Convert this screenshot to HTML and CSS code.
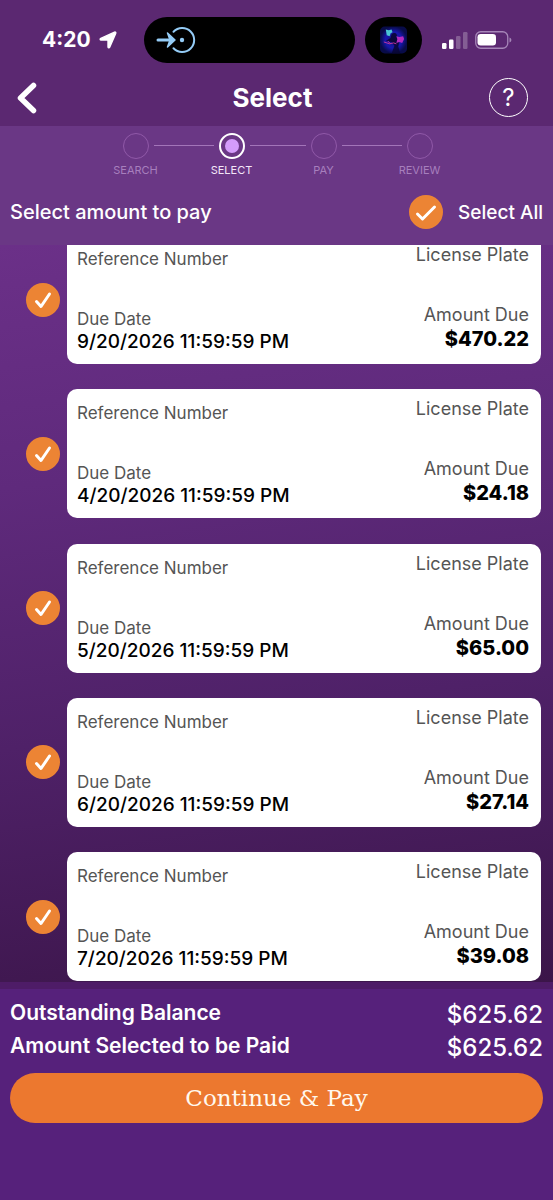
FILE: index.html
```html
<!DOCTYPE html>
<html lang="en">
<head>
<meta charset="utf-8">
<meta name="viewport" content="width=device-width, initial-scale=1">
<title>Select</title>
<link rel="stylesheet" href="styles.css">
</head>
<body>
<div class="app">
  <header class="top">
    <div class="status">
      <div class="clock">
        <span>4:20</span>
        <svg class="locate" viewBox="0 0 18 18" aria-hidden="true"><path d="M15.500 1.200 1.800 7.400c-1.100.5-.8 1.700.3 1.700h6.400q.5 0 .5.500v6.200c0 1.200 1.200 1.400 1.700.3l6-13.600c.4-1-.3-1.700-1.200-1.300Z" fill="#fff" stroke="#fff" stroke-width="1.400" stroke-linejoin="round"/></svg>
      </div>
      <div class="island">
        <svg class="island-icon" viewBox="0 0 40 28" aria-hidden="true" fill="none" stroke="#95ccf6" stroke-linecap="round" stroke-linejoin="round">
          <path d="M2 14h14" stroke-width="3"/>
          <path d="m11.500 7 7.500 7-7.500 7 2.500-7Z" fill="#95ccf6" stroke-width="1.500"/>
          <path d="M17.500 5.700A12 12 0 1 1 17.500 22.300" stroke-width="2"/>
          <circle cx="26" cy="14" r="2.200" fill="#95ccf6" stroke="none"/>
        </svg>
      </div>
      <div class="island island-small">
        <svg class="art" viewBox="0 0 28 28" aria-hidden="true">
          <defs><radialGradient id="glow"><stop offset="0" stop-color="#17107a"/><stop offset=".6" stop-color="#1717ae"/><stop offset="1" stop-color="#080b48"/></radialGradient></defs>
          <rect width="28" height="28" rx="5" fill="url(#glow)"/>
          <path d="M12 8c3-3 7 0 5 3l3 4-1 6 2 7h-9l3-8-3-4-6-1 5-3z" fill="#080630" opacity=".85"/>
          <path d="M6 3l3 1 3-1 1 3-2 1-1 3-3-1z" fill="#4ac6d5"/>
          <path d="M17 10l3 1 4-1 1 3-2 4-3-1-3 1 1-4z" fill="#b32bc0"/>
          <path d="M4 16l6 2 4-1 3 1M8 15l3 3" fill="none" stroke="#c0359e"/>
        </svg>
      </div>
      <svg class="signal" viewBox="0 0 26 17" aria-hidden="true" fill="#fff"><rect y="11" width="4.500" height="6" rx="1.200"/><rect x="7" y="7.500" width="4.500" height="9.500" rx="1.200"/><rect x="14" y="4" width="4.500" height="13" rx="1.200" opacity=".25"/><rect x="21" width="4.500" height="17" rx="1.200" opacity=".25"/></svg>
      <svg class="battery" viewBox="0 0 38 18" aria-hidden="true"><rect x=".75" y=".75" width="32" height="16.500" rx="5" fill="none" stroke="#a686b8" stroke-width="1.300"/><rect x="2.500" y="3" width="18.500" height="11.500" rx="3.200" fill="#fff"/><path d="M34.500 6.500c2.500 1 2.500 4 0 5z" fill="#a686b8"/></svg>
    </div>
    <div class="nav">
      <button class="back" type="button" aria-label="Back"><svg viewBox="0 0 20 32" aria-hidden="true"><path d="M16.500 3.500 3.500 16l13 12.500" fill="none" stroke="#fff" stroke-width="5.500" stroke-linecap="round" stroke-linejoin="round"/></svg></button>
      <h1 class="title">Select</h1>
      <button class="help" type="button" aria-label="Help">?</button>
    </div>
  </header>

  <section class="panel">
    <ol class="steps">
      <li class="step"><span class="dot"></span>SEARCH</li>
      <li class="link" aria-hidden="true"></li>
      <li class="step current" aria-current="step"><span class="dot"></span>SELECT</li>
      <li class="link short" aria-hidden="true"></li>
      <li class="step"><span class="dot"></span>PAY</li>
      <li class="link" aria-hidden="true"></li>
      <li class="step"><span class="dot"></span>REVIEW</li>
    </ol>
    <div class="choose">
      <h2 class="prompt">Select amount to pay</h2>
      <label class="all"><span class="tick"><input type="checkbox" checked><svg viewBox="0 0 34 34" aria-hidden="true"><path d="m8.500 19 5 5L25.500 12"/></svg></span>Select All</label>
    </div>
  </section>

  <main class="scroller">
    <ul class="bills">
      <li class="bill">
        <label class="tick"><input type="checkbox" checked aria-label="Bill due 9/20/2026"><svg viewBox="0 0 34 34" aria-hidden="true"><path d="m10.500 18.500 4.500 5 8.500-12.500"/></svg></label>
        <div class="card">
          <div class="col"><span class="label">Reference Number</span><span class="label lower">Due Date</span><span class="value">9/20/2026 11:59:59 PM</span></div>
          <div class="col right"><span class="label">License Plate</span><span class="label lower">Amount Due</span><span class="value">$470.22</span></div>
        </div>
      </li>
      <li class="bill">
        <label class="tick"><input type="checkbox" checked aria-label="Bill due 4/20/2026"><svg viewBox="0 0 34 34" aria-hidden="true"><path d="m10.500 18.500 4.500 5 8.500-12.500"/></svg></label>
        <div class="card">
          <div class="col"><span class="label">Reference Number</span><span class="label lower">Due Date</span><span class="value">4/20/2026 11:59:59 PM</span></div>
          <div class="col right"><span class="label">License Plate</span><span class="label lower">Amount Due</span><span class="value">$24.18</span></div>
        </div>
      </li>
      <li class="bill">
        <label class="tick"><input type="checkbox" checked aria-label="Bill due 5/20/2026"><svg viewBox="0 0 34 34" aria-hidden="true"><path d="m10.500 18.500 4.500 5 8.500-12.500"/></svg></label>
        <div class="card">
          <div class="col"><span class="label">Reference Number</span><span class="label lower">Due Date</span><span class="value">5/20/2026 11:59:59 PM</span></div>
          <div class="col right"><span class="label">License Plate</span><span class="label lower">Amount Due</span><span class="value">$65.00</span></div>
        </div>
      </li>
      <li class="bill">
        <label class="tick"><input type="checkbox" checked aria-label="Bill due 6/20/2026"><svg viewBox="0 0 34 34" aria-hidden="true"><path d="m10.500 18.500 4.500 5 8.500-12.500"/></svg></label>
        <div class="card">
          <div class="col"><span class="label">Reference Number</span><span class="label lower">Due Date</span><span class="value">6/20/2026 11:59:59 PM</span></div>
          <div class="col right"><span class="label">License Plate</span><span class="label lower">Amount Due</span><span class="value">$27.14</span></div>
        </div>
      </li>
      <li class="bill">
        <label class="tick"><input type="checkbox" checked aria-label="Bill due 7/20/2026"><svg viewBox="0 0 34 34" aria-hidden="true"><path d="m10.500 18.500 4.500 5 8.500-12.500"/></svg></label>
        <div class="card">
          <div class="col"><span class="label">Reference Number</span><span class="label lower">Due Date</span><span class="value">7/20/2026 11:59:59 PM</span></div>
          <div class="col right"><span class="label">License Plate</span><span class="label lower">Amount Due</span><span class="value">$39.08</span></div>
        </div>
      </li>
    </ul>
  </main>

  <footer class="summary">
    <dl class="totals">
      <div class="total"><dt>Outstanding Balance</dt><dd>$625.62</dd></div>
      <div class="total"><dt>Amount Selected to be Paid</dt><dd>$625.62</dd></div>
    </dl>
    <button class="pay" type="button">Continue &amp; Pay</button>
  </footer>
</div>
</body>
</html>
```
FILE: styles.css
```css
*, *::before, *::after { box-sizing: border-box; }
body, h1, h2, ol, ul, dl, dd { margin: 0; padding: 0; }
ol, ul { list-style: none; }
body { font-family: Inter, "Liberation Sans", sans-serif; color: #fff; background: #56217b; }
button { border: 0; padding: 0; background: none; color: inherit; font-family: inherit; }
svg { display: block; }

.app { display: flex; flex-direction: column; height: 100vh; }

.top { background: #5b2871; padding-top: 17px; }
.status { display: flex; align-items: center; height: 46px; padding: 0 36px 0 42px; }
.clock { display: flex; align-items: center; gap: 8px; flex: none; width: 102px; font-size: 21px; line-height: 26px; font-weight: 700; }
.locate { width: 18px; height: 18px; }
.island { flex: 1; max-width: 211px; height: 46px; border-radius: 23px; background: #000; padding: 9px 12px; }
.island-icon { width: 40px; height: 28px; }
.island-small { flex: none; width: 57px; margin-left: 10px; padding: 9px 15px; }
.art { width: 27px; height: 28px; }
.signal { width: 26px; height: 17px; margin-left: 20px; }
.battery { width: 38px; height: 18px; margin-left: 7px; }

.nav { display: grid; grid-template-columns: 1fr auto 1fr; align-items: center; height: 63px; padding: 6px 25px 0 17px; }
.back svg { width: 20px; height: 32px; }
.title { font-size: 26px; line-height: 30px; font-weight: 700; }
.help { justify-self: end; width: 39px; height: 39px; border: 1px solid #fff; border-radius: 50%; font-size: 24px; line-height: 36px; }

.panel { background: #6a3785; padding: 7px 10px 16px; }
.steps { display: flex; justify-content: center; padding-left: 2px; }
.step { display: flex; flex-direction: column; align-items: center; gap: 4px; width: 36px; font-size: 11px; line-height: 14px; white-space: nowrap; color: #a77fbd; }
.dot { display: grid; place-items: center; flex: none; width: 26px; height: 26px; border: 1px solid #9059a8; border-radius: 50%; }
.current { color: #f3e6f8; }
.current .dot { border-color: #fff; border-width: 2px; }
.current .dot::before { content: ""; width: 14px; height: 14px; border-radius: 50%; background: #d49cfb; }
.link { width: 60px; height: 1px; margin-top: 12px; background: #a375b9; }
.link.short { width: 56px; }
.choose { display: flex; align-items: center; justify-content: space-between; margin-top: 18px; height: 34px; }
.prompt { font-size: 20px; font-weight: 500; }
.all { display: flex; align-items: center; gap: 15px; font-size: 19px; font-weight: 500; }

.tick { display: grid; flex: none; width: 34px; height: 34px; }
.tick input, .tick svg { grid-area: 1 / 1; width: 34px; height: 34px; margin: 0; }
.tick input { appearance: none; border: 2px solid #ec8434; border-radius: 50%; }
.tick input:checked { background: #ec8434; }
.tick svg { fill: none; stroke: #fff; stroke-width: 3; stroke-linecap: round; stroke-linejoin: round; pointer-events: none; visibility: hidden; }
.tick input:checked + svg { visibility: visible; }

.scroller { flex: 1; min-height: 0; overflow: hidden; display: flex; flex-direction: column; background: linear-gradient(172deg, #6b3088, #5f2a7c 30%, #4f2168 62%, #3b1549); }
.bills { flex: 1; display: flex; flex-direction: column; justify-content: space-between; margin-top: -10px; padding: 0 12px 1px 26px; }
.bill { display: flex; align-items: center; gap: 7px; }
.card { flex: 1; display: flex; justify-content: space-between; min-height: 129px; padding: 0 12px 10px 10px; border-radius: 10px; background: #fff; }
.col { display: flex; flex-direction: column; padding-top: 13px; font-size: 17px; line-height: 22px; }
.label { color: #555; }
.lower { margin-top: 38px; }
.value { color: #000; font-size: 19px; line-height: 24px; font-weight: 500; }
.right { padding-top: 9px; text-align: right; font-size: 18px; }
.right .value { font-weight: 800; font-size: 20px; line-height: 26px; }

.summary { padding: 16px 10px 77px; background: linear-gradient(#4e1c67 7px, #56217b 7px); }
.total { display: flex; justify-content: space-between; }
.total dt { font-size: 21px; line-height: 30px; font-weight: 600; }
.total dd { font-size: 24px; line-height: 33px; font-weight: 500; }
.pay { display: block; width: 100%; height: 50px; margin-top: 9px; border-radius: 25px; background: #ec782f; color: #fff8ee; font-family: "DejaVu Serif", serif; font-size: 23px; }
```
